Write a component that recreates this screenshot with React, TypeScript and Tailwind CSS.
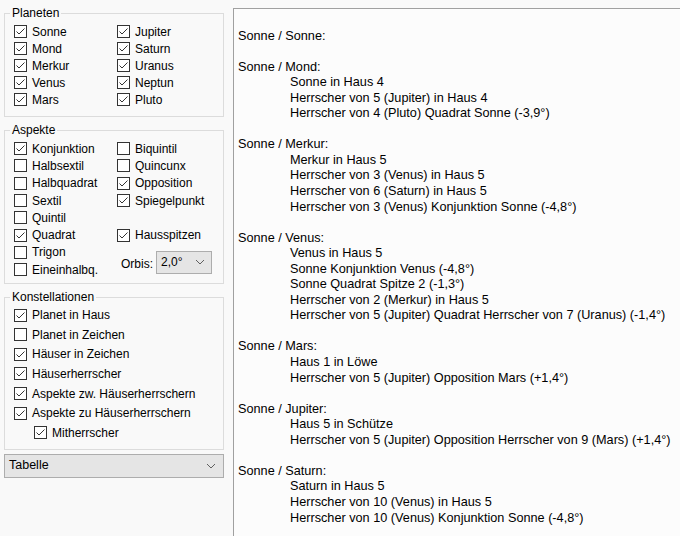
import React from 'react';

const font = { fontFamily: '"Liberation Sans", Arial, sans-serif' };

const Check = ({ on }: { on: boolean }) => (
  <span className="w-[13px] h-[13px] shrink-0 border border-[#333333] bg-white flex items-center justify-center">
    {on && (
      <svg width="11" height="11" viewBox="0 0 11 11" className="block">
        <path d="M1.5 5.5 L4 8 L9.5 2.5" fill="none" stroke="#333333" strokeWidth="1" />
      </svg>
    )}
  </span>
);

const Row = ({ label, on, h }: { label: string; on: boolean; h: string }) => (
  <div className={`flex items-center gap-[5px] ${h}`}>
    <Check on={on} />
    <span className="whitespace-nowrap">{label}</span>
  </div>
);

const Chevron = () => (
  <svg width="10" height="6" viewBox="0 0 10 6" className="block">
    <path d="M1 1 L5 5 L9 1" fill="none" stroke="#606060" strokeWidth="1" />
  </svg>
);

const Group = ({ title, children, className = '' }: { title: string; children: React.ReactNode; className?: string }) => (
  <fieldset className={`border border-[#dcdcdc] px-[9px] ${className}`}>
    <legend className="ml-[-4px] px-[2px] leading-[15px]">{title}</legend>
    {children}
  </fieldset>
);

const planetsL = ['Sonne', 'Mond', 'Merkur', 'Venus', 'Mars'];
const planetsR = ['Jupiter', 'Saturn', 'Uranus', 'Neptun', 'Pluto'];

const aspL: [string, boolean][] = [
  ['Konjunktion', true],
  ['Halbsextil', false],
  ['Halbquadrat', false],
  ['Sextil', false],
  ['Quintil', false],
  ['Quadrat', true],
  ['Trigon', false],
  ['Eineinhalbq.', false],
];
const aspR: [string, boolean][] = [
  ['Biquintil', false],
  ['Quincunx', false],
  ['Opposition', true],
  ['Spiegelpunkt', true],
];

const konst: [string, boolean][] = [
  ['Planet in Haus', true],
  ['Planet in Zeichen', false],
  ['Häuser in Zeichen', true],
  ['Häuserherrscher', true],
  ['Aspekte zw. Häuserherrschern', true],
  ['Aspekte zu Häuserherrschern', true],
];

type Block = { head: string; lines: string[] };

const blocks: Block[] = [
  { head: 'Sonne / Sonne:', lines: [] },
  {
    head: 'Sonne / Mond:',
    lines: ['Sonne in Haus 4', 'Herrscher von 5 (Jupiter) in Haus 4', 'Herrscher von 4 (Pluto) Quadrat Sonne (-3,9°)'],
  },
  {
    head: 'Sonne / Merkur:',
    lines: [
      'Merkur in Haus 5',
      'Herrscher von 3 (Venus) in Haus 5',
      'Herrscher von 6 (Saturn) in Haus 5',
      'Herrscher von 3 (Venus) Konjunktion Sonne (-4,8°)',
    ],
  },
  {
    head: 'Sonne / Venus:',
    lines: [
      'Venus in Haus 5',
      'Sonne Konjunktion Venus (-4,8°)',
      'Sonne Quadrat Spitze 2 (-1,3°)',
      'Herrscher von 2 (Merkur) in Haus 5',
      'Herrscher von 5 (Jupiter) Quadrat Herrscher von 7 (Uranus) (-1,4°)',
    ],
  },
  {
    head: 'Sonne / Mars:',
    lines: ['Haus 1 in Löwe', 'Herrscher von 5 (Jupiter) Opposition Mars (+1,4°)'],
  },
  {
    head: 'Sonne / Jupiter:',
    lines: ['Haus 5 in Schütze', 'Herrscher von 5 (Jupiter) Opposition Herrscher von 9 (Mars) (+1,4°)'],
  },
  {
    head: 'Sonne / Saturn:',
    lines: ['Saturn in Haus 5', 'Herrscher von 10 (Venus) in Haus 5', 'Herrscher von 10 (Venus) Konjunktion Sonne (-4,8°)'],
  },
];

export default function App() {
  return (
    <div className="w-[680px] h-[536px] overflow-hidden flex bg-[#f9f9f9] text-black text-[12px]" style={font}>
      {/* left settings column */}
      <div className="w-[233px] shrink-0 pl-[4px] pr-[9px] pt-[6px] flex flex-col">
        <Group title="Planeten" className="pt-[2px] pb-[8px]">
          <div className="grid grid-cols-[103px_1fr]">
            <div className="flex flex-col">
              {planetsL.map((p) => (
                <Row key={p} label={p} on h="h-[17px]" />
              ))}
            </div>
            <div className="flex flex-col">
              {planetsR.map((p) => (
                <Row key={p} label={p} on h="h-[17px]" />
              ))}
            </div>
          </div>
        </Group>

        <Group title="Aspekte" className="mt-[6px] pt-[2px] pb-[5px]">
          <div className="grid grid-cols-[103px_1fr]">
            <div className="flex flex-col">
              {aspL.map(([l, on]) => (
                <Row key={l} label={l} on={on} h="h-[17.3px]" />
              ))}
            </div>
            <div className="flex flex-col">
              {aspR.map(([l, on]) => (
                <Row key={l} label={l} on={on} h="h-[17.3px]" />
              ))}
              <div className="h-[17.3px]" />
              <Row label="Hausspitzen" on h="h-[17.3px]" />
              <div className="flex items-center mt-[7px]">
                <span className="ml-[4px] mt-[3px]">Orbis:</span>
                <div className="ml-[3px] w-[56px] h-[23px] bg-[#e5e5e5] border border-[#adadad] flex items-center justify-between pl-[4px] pr-[6px]">
                  <span>2,0°</span>
                  <Chevron />
                </div>
              </div>
            </div>
          </div>
        </Group>

        <Group title="Konstellationen" className="mt-[6px] pt-0 pb-[6px]">
          <div className="flex flex-col">
            {konst.map(([l, on]) => (
              <Row key={l} label={l} on={on} h="h-[19.6px]" />
            ))}
            <div className="pl-[20px]">
              <Row label="Mitherrscher" on h="h-[19.6px]" />
            </div>
          </div>
        </Group>

        <div className="mt-[4px] h-[24px] bg-[#e5e5e5] border border-[#adadad] flex items-center justify-between pl-[4px] pr-[7px]">
          <span className="text-[12.5px]">Tabelle</span>
          <Chevron />
        </div>
      </div>

      {/* result text panel */}
      <div className="flex-1 mt-[8px] border-l border-t border-[#a0a0a0] bg-[#fcfcfc] pl-[4px] pt-[4px] text-[12.7px] leading-[15.55px] whitespace-nowrap">
        <div>&nbsp;</div>
        {blocks.map((b, i) => (
          <div key={b.head}>
            <div>{b.head}</div>
            {b.lines.map((l) => (
              <div key={l} className="pl-[52px]">
                {l}
              </div>
            ))}
            {i < blocks.length - 1 && <div>&nbsp;</div>}
          </div>
        ))}
      </div>
    </div>
  );
}
